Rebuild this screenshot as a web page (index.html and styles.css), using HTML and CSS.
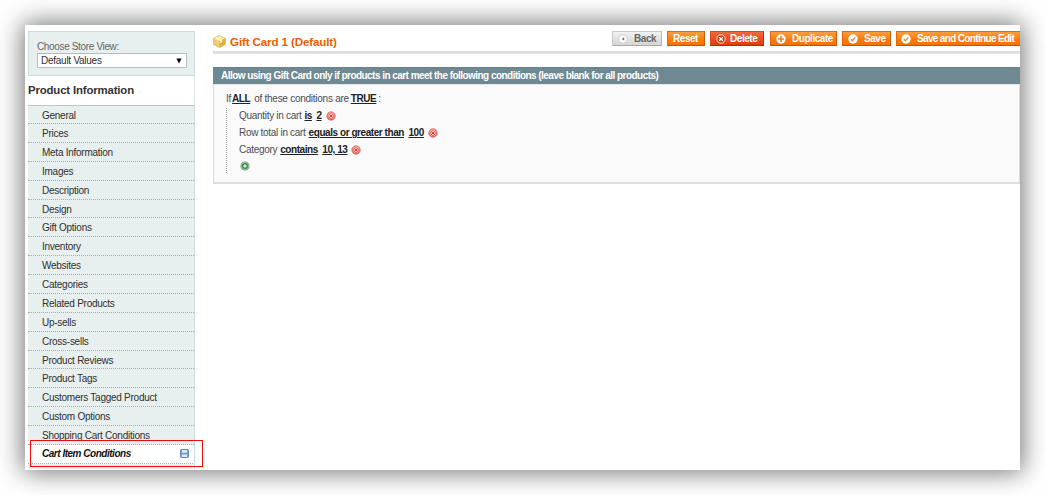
FILE: index.html
```html
<!DOCTYPE html>
<html lang="en">
<head>
<meta charset="utf-8">
<title>Gift Card 1 (Default)</title>
<link rel="stylesheet" href="styles.css">
</head>
<body>
<svg class="defs" width="0" height="0">
  <defs>
    <linearGradient id="rg" x1="0" y1="0" x2="0" y2="1"><stop offset="0" stop-color="#f29b94"/><stop offset="1" stop-color="#e8564c"/></linearGradient>
    <symbol id="remove" viewBox="0 0 10 10"><circle cx="5" cy="5" r="4.2" fill="url(#rg)" stroke="#e5645c" stroke-width=".8"/><path d="M3 3l4 4M7 3L3 7" stroke="#fbdcd9" stroke-width="2"/><path d="M3.2 3.2l3.6 3.6M6.8 3.2L3.2 6.8" stroke="#dd3b33" stroke-width="1"/></symbol>
    <symbol id="add" viewBox="0 0 10 10"><circle cx="5" cy="5" r="4.1" fill="#a4c8aa" stroke="#6d9c77" stroke-width=".8"/><circle cx="5" cy="5" r="3" fill="#3f8a50"/><path d="M5 3.2v3.6M3.2 5h3.6" stroke="#fff" stroke-width="1.1"/></symbol>
    <symbol id="check" viewBox="0 0 10 10"><circle cx="5" cy="5" r="4.7" fill="#fff"/><path d="M2.9 5.2l1.4 1.5 2.9-3.2" fill="none" stroke="#e8873a" stroke-width="1.4"/></symbol>
  </defs>
</svg>
<div class="sheet">
  <aside class="sidebar">
    <div class="store">
      <label class="store-label">Choose Store View:</label>
      <div class="select"><span>Default Values</span><svg width="6" height="6" viewBox="0 0 6 6"><path d="M.4 .6h5.2L3 5.6z" fill="#000"/></svg></div>
    </div>
    <h3 class="side-title">Product Information</h3>
    <ul class="tabs">
      <li>General</li><li>Prices</li><li>Meta Information</li><li>Images</li><li>Description</li><li>Design</li><li>Gift Options</li><li>Inventory</li><li>Websites</li><li>Categories</li><li>Related Products</li><li>Up-sells</li><li>Cross-sells</li><li>Product Reviews</li><li>Product Tags</li><li>Customers Tagged Product</li><li>Custom Options</li><li>Shopping Cart Conditions</li>
      <li class="active"><span>Cart Item Conditions</span><svg width="9" height="9" viewBox="0 0 9 9"><rect x=".5" y=".5" width="8" height="8" rx=".8" fill="#7ba0d6" stroke="#6288c4"/><rect x="2" y="1" width="5" height="2.6" fill="#dfeafa"/><rect x="2" y="5.6" width="5" height="2.4" fill="#e6efd8"/></svg></li>
    </ul>
    <div class="highlight"></div>
  </aside>
  <main class="main">
    <header class="head">
      <svg class="box" width="13" height="13" viewBox="0 0 13 13"><path d="M6.5 .5l5.8 2.7v6.2l-5.8 3.1-5.8-3.1V3.2z" fill="#f3cf73" stroke="#d3a345" stroke-width=".7"/><path d="M.9 3.4l5.6 2.8 5.6-2.8-5.6-2.7z" fill="#fae9b4"/><path d="M6.5 6.2l5.5-2.8v5.8l-5.5 3z" fill="#e3ac3d"/><path d="M3.4 2.1l5.8 2.8v2.3l-2 1V6L1.8 3z" fill="#fff3cf"/></svg>
      <h1 class="title">Gift Card 1 (Default)</h1>
      <div class="buttons">
        <span class="btn back"><svg width="10" height="10" viewBox="0 0 10 10"><circle cx="5" cy="5" r="4.4" fill="#f8f8f8" stroke="#c4c4c4" stroke-width=".7"/><path d="M6.2 3.4v3.2L3.8 5z" fill="#666"/></svg><b>Back</b></span>
        <span class="btn reset"><b>Reset</b></span>
        <span class="btn delete"><svg width="10" height="10" viewBox="0 0 10 10"><circle cx="5" cy="5" r="4.2" fill="#c93a16" stroke="#ffd9cc" stroke-width="1"/><path d="M3.2 3.2l3.6 3.6M6.8 3.2L3.2 6.8" stroke="#fff" stroke-width="1.3"/></svg><b>Delete</b></span>
        <span class="btn dup"><svg width="10" height="10" viewBox="0 0 10 10"><circle cx="5" cy="5" r="4.7" fill="#fff"/><path d="M5 2v6M2 5h6" stroke="#f08019" stroke-width="1.6"/></svg><b>Duplicate</b></span>
        <span class="btn save"><svg width="10" height="10"><use href="#check"/></svg><b>Save</b></span>
        <span class="btn cont"><svg width="10" height="10"><use href="#check"/></svg><b>Save and Continue Edit</b></span>
      </div>
    </header>
    <h4 class="bar"><span>Allow using Gift Card only if products in cart meet the following conditions (leave blank for all products)</span></h4>
    <section class="panel">
      <div class="rule"><span>If</span><u class="g-all">ALL</u><span class="g-of">of these conditions are</span><u class="g-true">TRUE</u><span class="g-colon">:</span></div>
      <div class="children">
        <div class="rule"><span>Quantity in cart</span><u>is</u><u>2</u><svg width="10" height="10"><use href="#remove"/></svg></div>
        <div class="rule"><span>Row total in cart</span><u>equals or greater than</u><u>100</u><svg width="10" height="10"><use href="#remove"/></svg></div>
        <div class="rule"><span>Category</span><u>contains</u><u>10, 13</u><svg width="10" height="10"><use href="#remove"/></svg></div>
        <div class="rule"><svg class="plus" width="10" height="10"><use href="#add"/></svg></div>
      </div>
    </section>
  </main>
</div>
</body>
</html>
```
FILE: styles.css
```css
* { box-sizing: border-box; }
body { margin: 0; width: 1045px; height: 495px; padding: 25px; overflow: hidden; background: #fff; font: 10px/12px "Liberation Sans", Arial, sans-serif; letter-spacing: -.26px; color: #2f2f2f; }
.defs { position: absolute; }
h1, h3, h4, ul { margin: 0; padding: 0; }
svg { display: block; flex: none; }
.sheet { width: 995px; height: 445px; background: #fff; box-shadow: 0 0 24px 2px rgba(0,0,0,.56); display: flex; }
.sidebar { position: relative; width: 167px; margin-left: 3px; padding-top: 6px; flex: none; }
.store { height: 45px; background: #e7efef; border: 1px solid #cddddd; padding: 8px 8px 0 8px; }
.store-label { display: block; height: 13px; line-height: 13px; color: #666; letter-spacing: -.35px; }
.select { display: flex; align-items: center; justify-content: space-between; width: 150px; height: 15px; border: 1px solid #b5bcbc; background: #fff; padding: 0 4px 0 3px; }
.side-title { height: 29px; line-height: 29px; font-size: 11.4px; letter-spacing: -.15px; border-right: 1px solid #dfe6e6; color: #333; }
.tabs { list-style: none; border-top: 1px solid #bec6c6; height: 364px; overflow: hidden; background: #e7efef; border-right: 1px solid #cddddd; }
.tabs li { height: 18.88px; line-height: 19.4px; padding-left: 14px; border-bottom: 1px dotted #a3b0b0; }
.tabs li:first-child { height: 18px; }
.tabs .active { display: flex; align-items: center; justify-content: space-between; padding-right: 6px; background: #fff; font-size: 10px; letter-spacing: -.48px; font-weight: bold; font-style: italic; color: #111; margin-right: -1px; }
.highlight { position: absolute; left: 2px; top: 415px; width: 173px; height: 27px; border: 1px solid #f00d0d; }
.main { flex: 1; min-width: 0; margin-left: 18px; padding-top: 6px; overflow: hidden; }
.head { display: flex; height: 23px; border-bottom: 3px solid #dfdfdf; }
.box { margin-top: 4px; }
.title { margin-left: 4px; font-size: 11.6px; letter-spacing: -.13px; line-height: 21px; color: #eb5e00; white-space: nowrap; }
.buttons { display: flex; margin-left: auto; height: 15px; letter-spacing: -.45px; font-size: 10px; }
.btn { display: flex; align-items: center; gap: 6px; padding-left: 6px; height: 15px; border: 1px solid #e8650e; border-bottom-color: #c94f08; border-right-color: #cf5a10; background: linear-gradient(#ff9c3c, #f77b0c 60%, #f5740a); color: #fff; white-space: nowrap; margin-left: 5px; }
.btn svg { margin-left: -1px; }
.btn b { line-height: 13px; margin-top: -1px; }
.back { width: 50px; border-color: #c9c9c9 #b5b5b5 #aaa #c9c9c9; background: linear-gradient(#f2f2f2, #d5d5d5); color: #666; }
.reset { width: 38px; padding-left: 5px; }
.delete { width: 54px; gap: 4px; background: linear-gradient(#f3683d, #e03c0c); border-color: #d9461c #b93108 #b02c05 #d9461c; }
.dup { width: 67px; margin-left: 6px; }
.save { width: 49px; }
.cont { width: 124px; border-right: 0; padding-left: 5px; letter-spacing: -.66px; }
.bar { margin-top: 13px; height: 17px; line-height: 16px; padding-left: 8px; background: #6f8992; border-top: 1px solid #66828c; color: #fff; font-size: 10px; letter-spacing: -.54px; white-space: nowrap; }
.panel { height: 100px; background: #fafafa; border: 1px solid #dcdcdc; border-top-color: #e6e6e6; border-bottom: 2px solid #dedede; padding: 5px 0 0 12px; color: #4c4c55; }
.rule { display: flex; align-items: center; height: 17px; white-space: nowrap; }
.rule u { font-size: 10px; letter-spacing: -.44px; font-weight: bold; color: #222; }
.children { border-left: 1px dotted #999; height: 65px; padding-left: 12px; margin-top: 1px; }
.children .rule { height: 16.7px; }
.g-all { margin-left: 1px; }
.g-of { margin-left: 4px; }
.g-true { margin-left: 2px; }
.g-colon { margin-left: 2px; }
.children .rule > span { letter-spacing: -.3px; }
.children u { margin-left: 4.5px; }
.children span + u { margin-left: 3px; }
.children u + svg { margin-left: 4px; }
.children .plus { margin-left: 1px; }
```
